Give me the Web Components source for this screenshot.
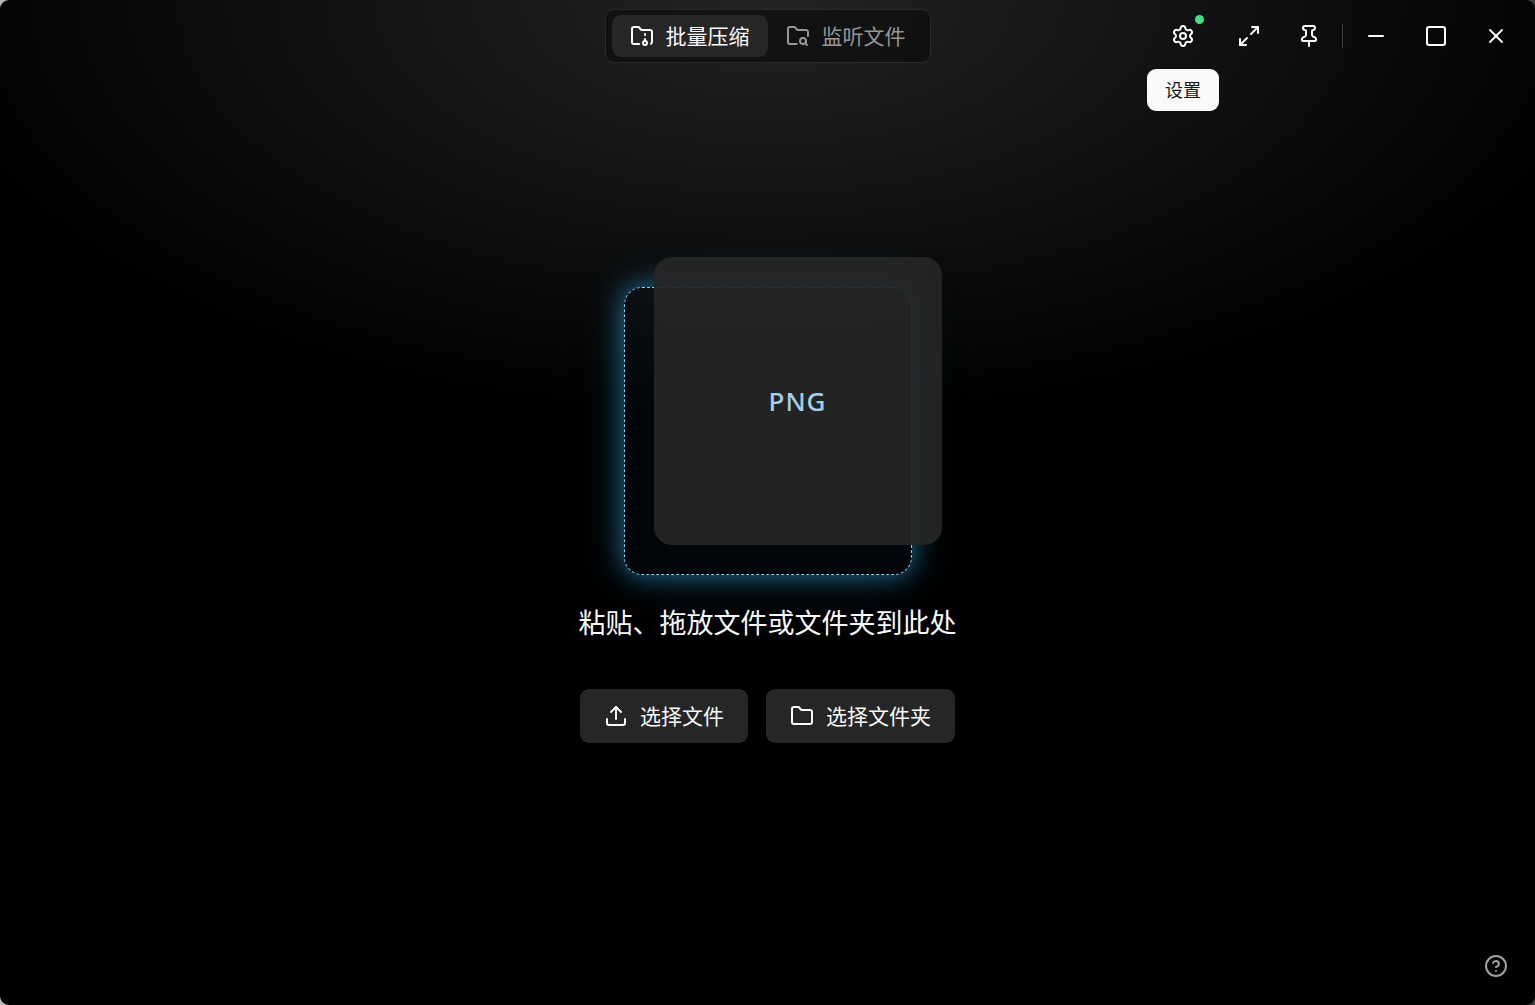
<!DOCTYPE html>
<html lang="zh-CN">
<head>
<meta charset="utf-8">
<title>批量压缩</title>
<style>
  html {
    background: linear-gradient(to right, #b4b8b8, #3c3c40);
  }
  body {
    margin: 0;
    font-family: "Noto Sans", "Noto Sans CJK SC", sans-serif;
    color: #fafafa;
  }
</style>
</head>
<body>
<app-window>
  <title-bar slot="header">
    <tab-bar slot="tabs">
      <tab-item icon="archive" active>批量压缩</tab-item>
      <tab-item icon="search">监听文件</tab-item>
    </tab-bar>
    <icon-button slot="actions" icon="settings" label="设置" badge tooltip></icon-button>
    <icon-button slot="actions" icon="expand" label="展开"></icon-button>
    <icon-button slot="actions" icon="pin" label="置顶"></icon-button>
    <icon-button slot="controls" icon="minus" label="最小化"></icon-button>
    <icon-button slot="controls" icon="square" label="最大化"></icon-button>
    <icon-button slot="controls" icon="close" label="关闭"></icon-button>
  </title-bar>
  <drop-zone>
    <file-card slot="card">PNG</file-card>
    <span slot="title">粘贴、拖放文件或文件夹到此处</span>
    <action-button slot="actions" icon="upload">选择文件</action-button>
    <action-button slot="actions" icon="folder">选择文件夹</action-button>
  </drop-zone>
  <icon-button slot="footer" icon="help" label="帮助" muted></icon-button>
</app-window>

<script>
const icons = {
  archive: `<circle cx="15" cy="19" r="2"/><path d="M20.9 19.8A2 2 0 0 0 22 18V8a2 2 0 0 0-2-2h-7.9a2 2 0 0 1-1.69-.9L9.6 3.9A2 2 0 0 0 7.93 3H4a2 2 0 0 0-2 2v13a2 2 0 0 0 2 2h5.1"/><path d="M15 11v-1"/><path d="M15 17v-2"/>`,
  search: `<path d="M10.7 20H4a2 2 0 0 1-2-2V5a2 2 0 0 1 2-2h3.9a2 2 0 0 1 1.69.9l.81 1.2a2 2 0 0 0 1.67.9H20a2 2 0 0 1 2 2v4.1"/><path d="m21 21-1.9-1.9"/><circle cx="17" cy="17" r="3"/>`,
  settings: `<path d="M9.671 4.136a2.34 2.34 0 0 1 4.659 0 2.34 2.34 0 0 0 3.319 1.915 2.34 2.34 0 0 1 2.33 4.033 2.34 2.34 0 0 0 0 3.831 2.34 2.34 0 0 1-2.33 4.033 2.34 2.34 0 0 0-3.319 1.915 2.34 2.34 0 0 1-4.659 0 2.34 2.34 0 0 0-3.32-1.915 2.34 2.34 0 0 1-2.33-4.033 2.34 2.34 0 0 0 0-3.831A2.34 2.34 0 0 1 6.35 6.051a2.34 2.34 0 0 0 3.319-1.915"/><circle cx="12" cy="12" r="3"/>`,
  expand: `<path d="M15 3h6v6"/><path d="m21 3-7 7"/><path d="m3 21 7-7"/><path d="M9 21H3v-6"/>`,
  pin: `<path d="M12 17v5"/><path d="M9 10.76a2 2 0 0 1-1.11 1.79l-1.78.9A2 2 0 0 0 5 15.24V16a1 1 0 0 0 1 1h12a1 1 0 0 0 1-1v-.76a2 2 0 0 0-1.11-1.79l-1.78-.9A2 2 0 0 1 15 10.76V7a1 1 0 0 1 1-1 2 2 0 0 0 0-4H8a2 2 0 0 0 0 4 1 1 0 0 1 1 1z"/>`,
  minus: `<path d="M5 12h14"/>`,
  square: `<rect x="3" y="3" width="18" height="18" rx="2"/>`,
  close: `<path d="M18 6 6 18"/><path d="m6 6 12 12"/>`,
  upload: `<path d="M21 15v4a2 2 0 0 1-2 2H5a2 2 0 0 1-2-2v-4"/><path d="m17 8-5-5-5 5"/><path d="M12 3v12"/>`,
  folder: `<path d="M20 20a2 2 0 0 0 2-2V8a2 2 0 0 0-2-2h-7.9a2 2 0 0 1-1.69-.9L9.6 3.9A2 2 0 0 0 7.93 3H4a2 2 0 0 0-2 2v13a2 2 0 0 0 2 2Z"/>`,
  help: `<circle cx="12" cy="12" r="10"/><path d="M9.09 9a3 3 0 0 1 5.83 1c0 2-3 3-3 3"/><path d="M12 17h.01"/>`,
};

const icon = (name) =>
  `<svg viewBox="0 0 24 24" width="24" height="24" fill="none" stroke="currentColor" stroke-width="2" stroke-linecap="round" stroke-linejoin="round" aria-hidden="true">${icons[name]}</svg>`;

const base = `
  *, :host { box-sizing: border-box; }
  button {
    margin: 0;
    padding: 0;
    border: 0;
    background: none;
    color: inherit;
    font: inherit;
    cursor: pointer;
  }
  svg { display: block; flex: none; }
`;

class BaseElement extends HTMLElement {
  constructor() {
    super();
    this.attachShadow({ mode: 'open' });
  }
  connectedCallback() {
    this.shadowRoot.innerHTML = `<style>${base}</style>${this.render()}`;
  }
}

class AppWindow extends BaseElement {
  render() {
    return `
      <style>
        :host {
          display: flex;
          flex-direction: column;
          min-height: 100vh;
          border-radius: 9px;
          background: radial-gradient(ellipse 56% 42% at 50% 0, #222325, #000) #000;
        }
        main {
          flex: 1;
          display: flex;
          align-items: center;
          justify-content: center;
          padding-top: 12px;
        }
        footer {
          display: flex;
          justify-content: flex-end;
          padding: 0 18px 18px;
        }
      </style>
      <slot name="header"></slot>
      <main><slot></slot></main>
      <footer><slot name="footer"></slot></footer>
    `;
  }
}

class TitleBar extends BaseElement {
  render() {
    return `
      <style>
        :host { display: block; }
        header {
          display: grid;
          grid-template-columns: 1fr auto 1fr;
          align-items: center;
          height: 72px;
          padding: 0 18px;
        }
        .right {
          grid-column: 3;
          display: flex;
          align-items: center;
          justify-content: flex-end;
          gap: 12px;
        }
        .group { display: flex; gap: 18px; }
        .line { width: 1px; height: 24px; background: #3a3a3a; }
        nav { grid-column: 2; }
      </style>
      <header>
        <nav><slot name="tabs"></slot></nav>
        <div class="right">
          <div class="group"><slot name="actions"></slot></div>
          <div class="line"></div>
          <div class="group"><slot name="controls"></slot></div>
        </div>
      </header>
    `;
  }
}

class TabBar extends BaseElement {
  render() {
    return `
      <style>
        :host {
          display: flex;
          padding: 5px 6px;
          border: 1px solid #29292a;
          border-radius: 9px;
          background: rgba(10, 10, 10, 0.6);
        }
      </style>
      <slot></slot>
    `;
  }
}

class TabItem extends BaseElement {
  render() {
    return `
      <style>
        :host { display: block; color: #969696; }
        :host([active]) { color: #fafafa; }
        button {
          display: flex;
          align-items: center;
          gap: 12px;
          height: 42px;
          padding: 0 18px;
          border-radius: 9px;
          font-size: 21px;
          line-height: 30px;
        }
        :host([active]) button { background: #262626; }
      </style>
      <button type="button">${icon(this.getAttribute('icon'))}<slot></slot></button>
    `;
  }
}

class IconButton extends BaseElement {
  render() {
    const label = this.getAttribute('label');
    return `
      <style>
        :host { display: block; position: relative; }
        :host([badge]) { margin-right: 6px; }
        :host([muted]) { color: #a1a1a1; }
        button {
          display: grid;
          place-items: center;
          width: 42px;
          height: 42px;
        }
        .badge {
          position: absolute;
          top: 0;
          right: 0;
          width: 9px;
          height: 9px;
          border-radius: 50%;
          background: #4ade80;
        }
        .tooltip {
          position: absolute;
          top: 54px;
          left: 50%;
          transform: translateX(-50%);
          padding: 9px 18px;
          border-radius: 9px;
          background: #fafafa;
          color: #171717;
          font-size: 18px;
          line-height: 24px;
          white-space: nowrap;
        }
      </style>
      <button type="button" aria-label="${label}">${icon(this.getAttribute('icon'))}</button>
      ${this.hasAttribute('badge') ? '<span class="badge"></span>' : ''}
      ${this.hasAttribute('tooltip') ? `<div class="tooltip" role="tooltip">${label}</div>` : ''}
    `;
  }
}

class DropZone extends BaseElement {
  render() {
    return `
      <style>
        :host {
          display: flex;
          flex-direction: column;
          align-items: center;
        }
        h1 {
          margin: 30px 0 48px;
          font-size: 27px;
          font-weight: 400;
          line-height: 36px;
        }
        .actions { display: flex; gap: 18px; }
      </style>
      <slot name="card"></slot>
      <h1><slot name="title"></slot></h1>
      <div class="actions"><slot name="actions"></slot></div>
    `;
  }
}

class FileCard extends BaseElement {
  render() {
    return `
      <style>
        :host {
          display: block;
          position: relative;
          width: 288px;
          height: 288px;
        }
        .outline {
          height: 100%;
          border: 1px dashed #7dd3fc;
          border-radius: 18px;
          background: rgba(56, 189, 248, 0.03);
          box-shadow: 0 0 24px rgba(56, 180, 240, 0.5), 0 0 48px rgba(56, 180, 240, 0.25);
        }
        /* lifted copy of the card, up and to the right */
        .card {
          position: absolute;
          inset: -30px -30px 30px 30px;
          display: grid;
          place-items: center;
          border-radius: 18px;
          background: rgba(38, 38, 38, 0.93);
          color: #a5d0e6;
          font-size: 26px;
          font-weight: 500;
          line-height: 36px;
          letter-spacing: 1px;
        }
      </style>
      <div class="outline"></div>
      <div class="card"><slot></slot></div>
    `;
  }
}

class ActionButton extends BaseElement {
  render() {
    return `
      <style>
        :host { display: block; }
        button {
          display: flex;
          align-items: center;
          gap: 12px;
          height: 54px;
          padding: 0 24px;
          border-radius: 9px;
          background: #262626;
          font-size: 21px;
          line-height: 30px;
        }
      </style>
      <button type="button">${icon(this.getAttribute('icon'))}<slot></slot></button>
    `;
  }
}

customElements.define('app-window', AppWindow);
customElements.define('title-bar', TitleBar);
customElements.define('tab-bar', TabBar);
customElements.define('tab-item', TabItem);
customElements.define('icon-button', IconButton);
customElements.define('drop-zone', DropZone);
customElements.define('file-card', FileCard);
customElements.define('action-button', ActionButton);
</script>
</body>
</html>
